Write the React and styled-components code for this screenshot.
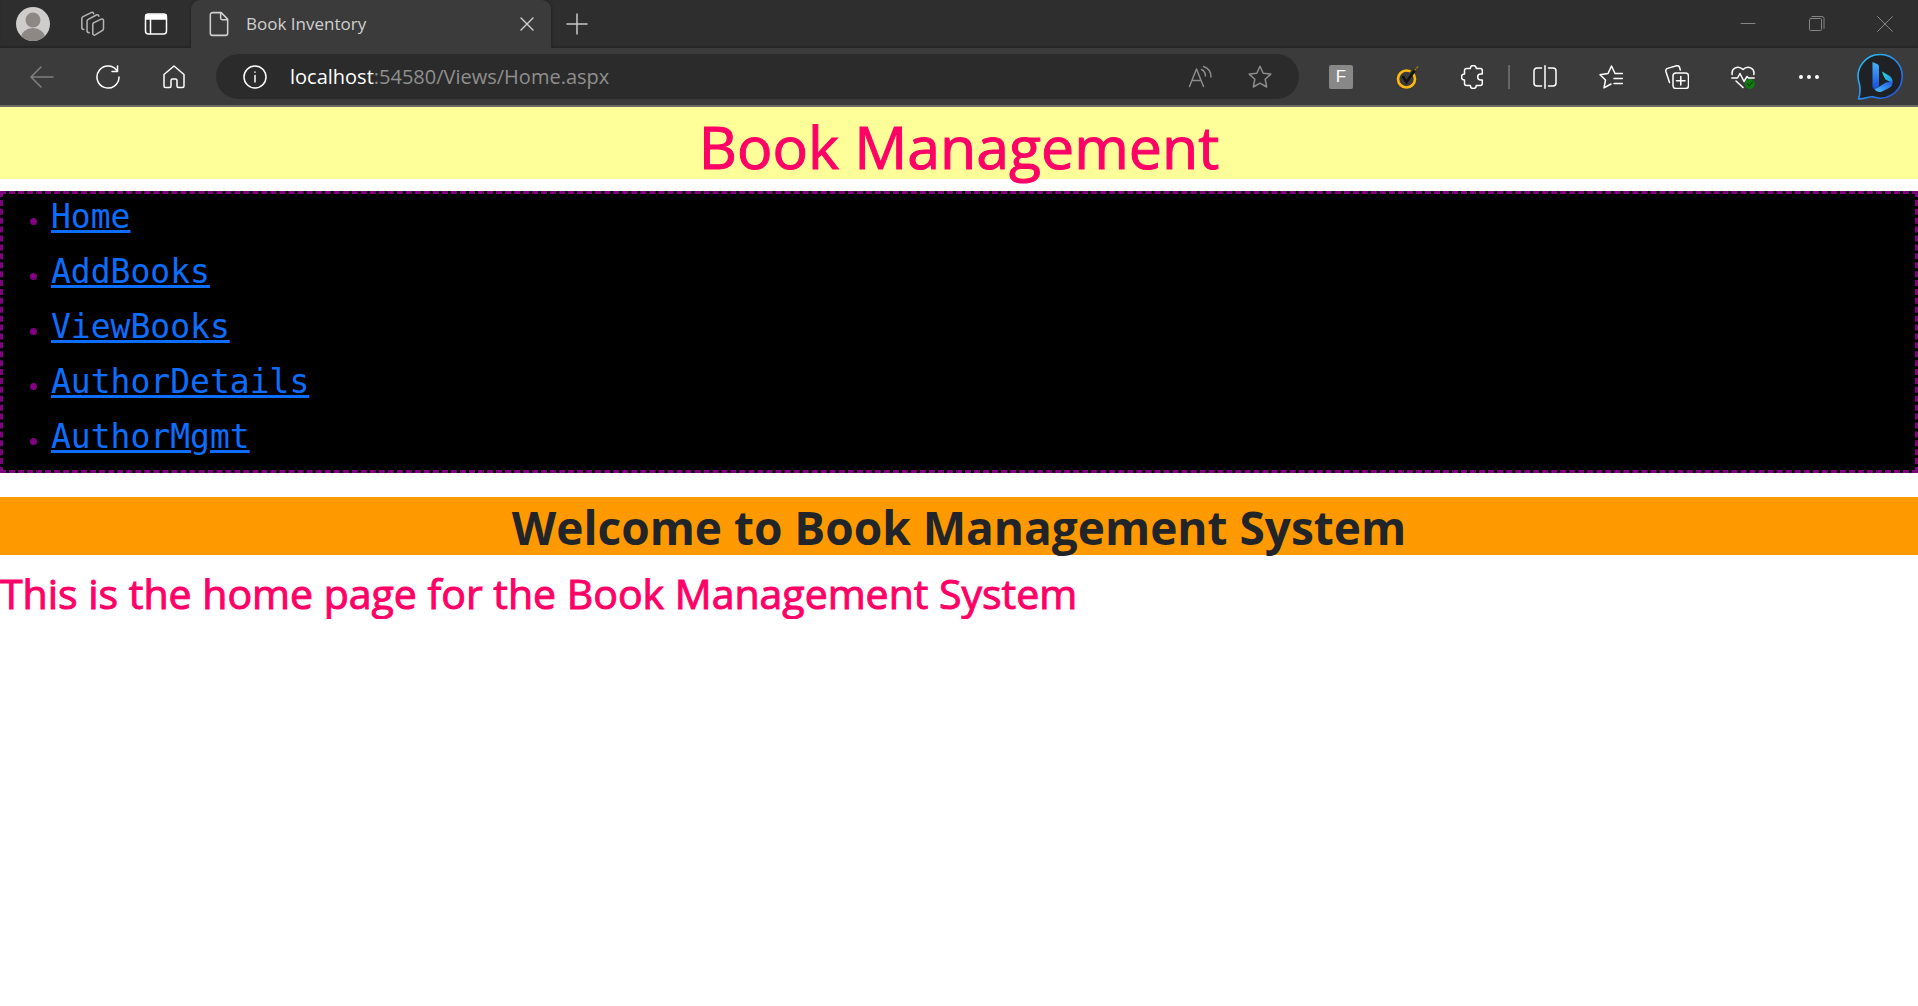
import React from "react";
import styled, { createGlobalStyle } from "styled-components";

const GlobalStyle = createGlobalStyle`
  *, *::before, *::after { box-sizing: border-box; }
  body {
    margin: 0;
    background: #fff;
    color: #212529;
    font-family: "Open Sans", "Noto Sans", sans-serif;
    font-size: 24px;
    line-height: 36px;
  }
`;

const TabStrip = styled.header`
  display: flex;
  height: 48px;
  background: #2e2e2e;
  box-shadow: inset 0 -2px 1px #262626;
`;

const StripButton = styled.button`
  display: flex;
  align-items: center;
  justify-content: center;
  width: ${(p) => p.$width}px;
  padding: 0;
  border: 0;
  background: none;
  color: ${(p) => p.$color || "#fff"};
`;

const Tab = styled.div`
  display: flex;
  align-items: center;
  width: 360px;
  padding: 0 12px 0 15px;
  border-radius: 9px 9px 0 0;
  background: #3b3b3b;
  box-shadow: 0 0 3px #1c1c1c;
  clip-path: inset(0 -4px 0 -4px);
  color: #d0d0d0;
`;

const TabTitle = styled.span`
  flex: 1;
  padding-left: 14px;
  font-size: 17px;
  line-height: 24px;
`;

const WindowControls = styled.div`
  display: flex;
  margin-left: auto;
`;

const Toolbar = styled.div`
  display: flex;
  align-items: center;
  height: 59px;
  padding: 0 14px 0 9px;
  border-bottom: 2px solid #6b6b6b;
  background: #3b3b3b;
`;

const ToolButton = styled.button`
  display: flex;
  flex: none;
  align-items: center;
  justify-content: center;
  width: 66px;
  height: 45px;
  padding: 0;
  border: 0;
  background: none;
  color: ${(p) => (p.$dim ? "#808080" : "#fff")};
`;

const AddressBar = styled.div`
  display: flex;
  flex: 1;
  align-items: center;
  height: 45px;
  margin: 0 9px;
  padding: 0 9px;
  border-radius: 23px;
  background: #2b2b2b;
`;

const AddressButton = styled(ToolButton)`
  width: 60px;
  color: ${(p) => (p.$dim ? "#8c8c8c" : "#fff")};
`;

const Address = styled.div`
  flex: 1;
  padding-left: 5px;
  color: #8f8f8f;
  font-size: 20px;
  line-height: 30px;

  b {
    color: #fff;
    font-weight: 400;
  }
`;

const Divider = styled.span`
  flex: none;
  width: 2px;
  height: 24px;
  margin: 0 2px;
  background: #666;
`;

const ExtensionBadge = styled.span`
  width: 24px;
  height: 24px;
  border-radius: 2px;
  background: #888;
  color: #fff;
  font-size: 17px;
  line-height: 24px;
`;

const BingButton = styled(ToolButton)`
  width: 48px;
  height: 48px;
  margin-left: 14px;
`;

const Banner = styled.h1`
  margin: 0 0 12px;
  padding-top: 6px;
  background: #ff9;
  color: #f06;
  font-size: 59px;
  font-weight: 500;
  line-height: 66px;
  text-align: center;
  -webkit-text-stroke: 1px #f06;
`;

const Menu = styled.ul`
  margin: 0 0 24px;
  padding: 0 0 1px 48px;
  border: 3px dashed purple;
  background: #000;
  color: purple;
  font-size: 21px;
`;

const MenuItem = styled.li`
  padding-bottom: 9px;
  line-height: 24px;
`;

const MenuLink = styled.a`
  color: #0d6efd;
  font-family: "DejaVu Sans Mono", monospace;
  font-size: 33px;
  line-height: 46px;
  text-decoration: underline 3px;
  text-underline-offset: 2px;
`;

const Welcome = styled.h2`
  margin: 0 0 12px;
  padding-top: 2px;
  background: #f90;
  font-size: 46px;
  font-weight: 700;
  line-height: 56px;
  text-align: center;
`;

const Intro = styled.h3`
  margin: 0;
  color: #f06;
  font-size: 41px;
  font-weight: 500;
  line-height: 52px;
  -webkit-text-stroke: 1px #f06;
`;

const Icon = ({ size = 24, width = 1.5, children }) => (
  <svg width={size} height={size} viewBox="0 0 24 24" fill="none" stroke="currentColor"
    strokeWidth={width} strokeLinecap="round" strokeLinejoin="round" aria-hidden="true">
    {children}
  </svg>
);

const AvatarIcon = () => (
  <svg width="34" height="34" viewBox="0 0 34 34" aria-hidden="true">
    <defs><clipPath id="avatar"><circle cx="17" cy="17" r="17" /></clipPath></defs>
    <g clipPath="url(#avatar)">
      <rect width="34" height="34" fill="#cfcdcb" />
      <circle cx="17" cy="13" r="7.5" fill="#8c8886" />
      <ellipse cx="17" cy="31" rx="12" ry="10" fill="#8c8886" />
    </g>
  </svg>
);

const BingIcon = () => (
  <svg width="48" height="48" viewBox="0 0 48 48" aria-hidden="true">
    <defs>
      <linearGradient id="ring" x1="0" y1="0" x2="1" y2="1">
        <stop offset="0" stopColor="#1fc8f5" /><stop offset=".4" stopColor="#2b9bf5" /><stop offset="1" stopColor="#1c4fe0" />
      </linearGradient>
      <linearGradient id="stem" x1="0" y1="0" x2="0" y2="1">
        <stop offset="0" stopColor="#46b4fb" /><stop offset="1" stopColor="#1848dc" />
      </linearGradient>
      <linearGradient id="leaf" x1="0" y1="0" x2="1" y2="1">
        <stop offset="0" stopColor="#2be0d8" /><stop offset="1" stopColor="#2589ee" />
      </linearGradient>
      <linearGradient id="base" x1="0" y1="1" x2="1" y2="0">
        <stop offset="0" stopColor="#4cc0fa" /><stop offset="1" stopColor="#1c55e2" />
      </linearGradient>
    </defs>
    <path d="M24.500 1.500a21.800 21.800 0 1 1-7.500 42.300c-4-.8-9 2.600-14.500 2 2-5 2-10 .8-15.500A21.800 21.800 0 0 1 24.500 1.500z" fill="#202124" stroke="url(#ring)" strokeWidth="1.600" />
    <path d="M16.500 9l4.500 2c1.500.8 2 1.500 2 3v19l-4 3.500c-1.700-.6-2.500-2-2.500-4z" fill="url(#stem)" />
    <path d="M26 18.500l6 3.500c3.500 2 5 4.500 4.500 8l-7-3.500c-1.500-2.500-2.500-5-3.500-8z" fill="url(#leaf)" />
    <path d="M18.500 36.500l11.500-7 6.500-1c.5 3-1 5-3.500 6.500l-7 3.500c-3 1.300-5.500.2-7.500-2z" fill="url(#base)" />
  </svg>
);

const pages = ["Home", "AddBooks", "ViewBooks", "AuthorDetails", "AuthorMgmt"];

export default function App() {
  return (
    <>
      <GlobalStyle />
      <TabStrip>
        <StripButton $width={66} aria-label="Profile"><AvatarIcon /></StripButton>
        <StripButton $width={54} $color="#b5b5b5" aria-label="Workspaces">
          <Icon size={26} width={1.4}>
            <path d="M12.500 11l7-3.500a1.500 1.500 0 0 1 2.200 1.300v7.400a2 2 0 0 1-1.200 1.900l-6.500 4a1.500 1.500 0 0 1-2.200-1.300V12z" />
            <path d="M8.500 20c-1.300 0-2-.6-2-1.700V9.500a2 2 0 0 1 1.100-1.800l7.500-4c1.300-.6 2.200 0 2.300 1.200" />
            <path d="M3.500 17c-1.300 0-1.800-.6-1.800-1.700V7a2 2 0 0 1 1.100-1.800l7.500-3.700c1.300-.6 2.200 0 2.300 1" />
          </Icon>
        </StripButton>
        <StripButton $width={71} aria-label="Tab actions">
          <Icon><rect x="1.500" y="2" width="21" height="20" rx="3" /><path d="M2 3h20v4H2z" fill="currentColor" /><path d="M6.500 7v14.500" /></Icon>
        </StripButton>
        <Tab>
          <Icon size={26} width={1.400}><path d="M4 3.500A2 2 0 0 1 6 1.500h8l6 6v13a2 2 0 0 1-2 2H6a2 2 0 0 1-2-2zM13.500 1.500v5a1.500 1.500 0 0 0 1.500 1.500h5" /></Icon>
          <TabTitle>Book Inventory</TabTitle>
          <StripButton $width={24} $color="#d0d0d0" aria-label="Close tab"><Icon width={1.400}><path d="M6 6l12 12M18 6L6 18" /></Icon></StripButton>
        </Tab>
        <StripButton $width={52} $color="#c8c8c8" aria-label="New tab"><Icon><path d="M12 2v20M2 12h20" /></Icon></StripButton>
        <WindowControls>
          <StripButton $width={69} $color="#858585" aria-label="Minimize"><Icon width={1}><path d="M5 11.500h14" /></Icon></StripButton>
          <StripButton $width={69} $color="#858585" aria-label="Restore"><Icon width={1}><rect x="4.500" y="6.500" width="12" height="12" rx="1" /><path d="M7 4.500h10a2 2 0 0 1 2 2v10" /></Icon></StripButton>
          <StripButton $width={67} $color="#858585" aria-label="Close"><Icon width={1}><path d="M4.500 4.500l15 15M19.500 4.500l-15 15" /></Icon></StripButton>
        </WindowControls>
      </TabStrip>
      <Toolbar>
        <ToolButton $dim aria-label="Back"><Icon><path d="M23 12H1M11 2L1 12l10 10" /></Icon></ToolButton>
        <ToolButton aria-label="Refresh"><Icon><path d="M21.500 6.500A11 11 0 1 0 23 12M21.500 1v5.500H16" /></Icon></ToolButton>
        <ToolButton aria-label="Home"><Icon><path d="M12 1L2 9.500V21a1.500 1.500 0 0 0 1.500 1.500h4A1.500 1.500 0 0 0 9 21v-5.500a1.500 1.500 0 0 1 1.500-1.500h3a1.500 1.500 0 0 1 1.500 1.500V21a1.500 1.500 0 0 0 1.500 1.500h4A1.500 1.500 0 0 0 22 21V9.500z" /></Icon></ToolButton>
        <AddressBar>
          <AddressButton aria-label="Site information"><Icon><circle cx="12" cy="12" r="11" /><path d="M12 10.500v6.500M12 7v.2" /></Icon></AddressButton>
          <Address><b>localhost</b>:54580/Views/Home.aspx</Address>
          <AddressButton $dim aria-label="Read aloud"><Icon width={1.500}><path d="M1.500 21.500L8.500 4l7 17.500M4.500 15.500h8M13.500 4.500c2.500 1.300 4 3.500 4 6.500M15.500 1.500c4.500 1.500 7.500 5.500 7.500 10.500" /></Icon></AddressButton>
          <AddressButton $dim aria-label="Add to favorites"><Icon><path d="M12 1.200l3.200 7 7.600.9-5.600 5.200 1.500 7.700-6.700-3.800L5.300 22l1.500-7.700L1.200 9.100l7.600-.9z" /></Icon></AddressButton>
        </AddressBar>
        <ToolButton aria-label="F extension"><ExtensionBadge>F</ExtensionBadge></ToolButton>
        <ToolButton aria-label="Norton"><Icon><circle cx="11.500" cy="14" r="8.500" stroke="#fdb913" strokeWidth="2.600" /><path d="M16 8L23 1.500" stroke="#3b3b3b" strokeWidth="3" /><path d="M7.500 11l4 6L20 5" stroke="#111" strokeWidth="2.600" strokeLinecap="butt" strokeLinejoin="miter" /><path d="M20 5l3-3.500" stroke="#a37a16" strokeDasharray="1 2" /></Icon></ToolButton>
        <ToolButton aria-label="Extensions"><Icon><path d="M5.500 3.500h3.800a3 3 0 0 1 6 0h4a2 2 0 0 1 2 2V9h-1.600a3 3 0 0 0 0 6h1.600v3.500a2 2 0 0 1-2 2h-4a3 3 0 0 1-6 0H5.500a2 2 0 0 1-2-2V15a3 3 0 0 1 0-6V5.500a2 2 0 0 1 2-2z" /></Icon></ToolButton>
        <Divider />
        <ToolButton aria-label="Split screen"><Icon><path d="M12 .8v22.400M8.500 3H4a3 3 0 0 0-3 3v12a3 3 0 0 0 3 3h4.500M15.500 3H20a3 3 0 0 1 3 3v12a3 3 0 0 1-3 3h-4.500" /></Icon></ToolButton>
        <ToolButton aria-label="Favorites"><Icon><path d="M23.500 8.500h-7.500L12.500 1 9 8.500l-8 1.200 5.500 5.300L5 22.800l7-3.800M15 13.500h8.500M15 18.500h8.500" /></Icon></ToolButton>
        <ToolButton aria-label="Collections"><Icon><rect x="8" y="8" width="15.500" height="15.500" rx="3" /><path d="M15.800 11.500v8.500M11.500 15.800h8.500M4.500 17.500L.9 6.500A2.500 2.500 0 0 1 2.600 3.400L11.500.8a2.500 2.500 0 0 1 3.100 1.700l.7 2.500" /></Icon></ToolButton>
        <ToolButton aria-label="Browser essentials"><Icon><path d="M1.200 9.500C0 3.500 7-.5 12 4.500c5-5 12-1 10.800 5M.8 13h5.700L9 8.500l4 8 3-5 1.500 1.500h5.700M5 16l7 6.500" /><circle cx="18.800" cy="19" r="5" fill="#107c10" stroke="none" /><path d="M16.500 19l1.800 1.800 3-3.600" stroke="#06400a" strokeWidth="1.200" /></Icon></ToolButton>
        <ToolButton aria-label="Settings and more"><Icon><g fill="currentColor" stroke="none"><circle cx="4" cy="12" r="2" /><circle cx="12" cy="12" r="2" /><circle cx="20" cy="12" r="2" /></g></Icon></ToolButton>
        <BingButton aria-label="Bing"><BingIcon /></BingButton>
      </Toolbar>
      <main>
        <Banner>Book Management</Banner>
        <nav>
          <Menu>
            {pages.map((page) => (
              <MenuItem key={page}><MenuLink href={`#${page}`}>{page}</MenuLink></MenuItem>
            ))}
          </Menu>
        </nav>
        <Welcome>Welcome to Book Management System</Welcome>
        <Intro>This is the home page for the Book Management System</Intro>
      </main>
    </>
  );
}
